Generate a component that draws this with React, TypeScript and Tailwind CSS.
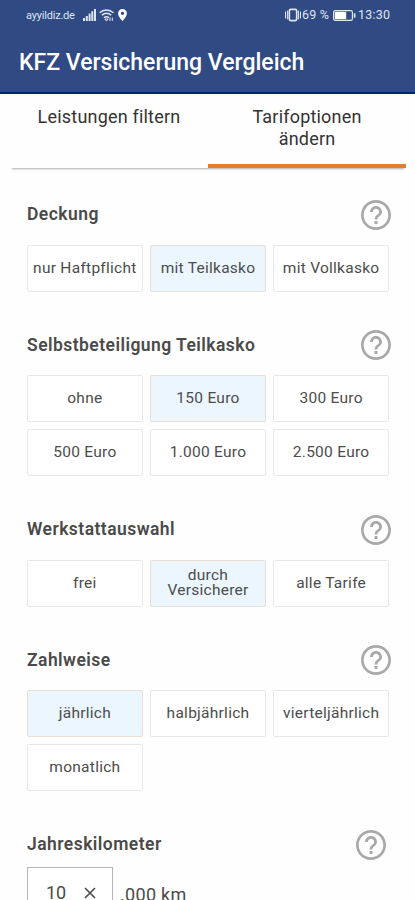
import { useState } from "react";

type OptionGroup = {
  title: string;
  options: string[];
  initial: string;
};

const groups: OptionGroup[] = [
  {
    title: "Deckung",
    options: ["nur Haftpflicht", "mit Teilkasko", "mit Vollkasko"],
    initial: "mit Teilkasko",
  },
  {
    title: "Selbstbeteiligung Teilkasko",
    options: ["ohne", "150 Euro", "300 Euro", "500 Euro", "1.000 Euro", "2.500 Euro"],
    initial: "150 Euro",
  },
  {
    title: "Werkstattauswahl",
    options: ["frei", "durch Versicherer", "alle Tarife"],
    initial: "durch Versicherer",
  },
  {
    title: "Zahlweise",
    options: ["jährlich", "halbjährlich", "vierteljährlich", "monatlich"],
    initial: "jährlich",
  },
];

function HelpIcon() {
  return (
    <svg viewBox="2 2 20 20" className="h-[30px] w-[30px] shrink-0" fill="#a9a9a9">
      <path d="M11 18h2v-2h-2v2zm1-16C6.48 2 2 6.48 2 12s4.48 10 10 10 10-4.48 10-10S17.52 2 12 2zm0 18.2c-4.53 0-8.2-3.67-8.2-8.2s3.67-8.2 8.2-8.2 8.2 3.67 8.2 8.2-3.67 8.2-8.2 8.2zm0-14.2c-2.21 0-4 1.79-4 4h1.9c0-1.16.94-2.1 2.1-2.1s2.1.94 2.1 2.1c0 2-3 1.75-3 5h1.8c0-2.25 3.1-2.5 3.1-5 0-2.21-1.79-4-4-4z" />
    </svg>
  );
}

function StatusBar() {
  return (
    <div className="flex h-[30px] items-center pr-6 pl-[26px] text-[#dfe5f2]">
      <span className="w-[57px] text-[11px] leading-none tracking-[-0.2px] whitespace-nowrap">
        ayyildiz.de
      </span>
      {/* Signal */}
      <svg viewBox="0 0 13 12" className="h-3 w-[13px]" fill="currentColor">
        <rect x="0" y="9" width="2" height="3" />
        <rect x="2.8" y="7" width="2" height="5" />
        <rect x="5.6" y="4.6" width="2" height="7.4" />
        <rect x="8.3" y="2.3" width="2" height="9.7" />
        <rect x="11" y="0" width="2" height="12" />
      </svg>
      {/* Wifi */}
      <svg
        viewBox="0 0 15 13"
        className="ml-[3px] h-[13px] w-[15px]"
        fill="none"
        stroke="currentColor"
        strokeWidth="1.5"
      >
        <path d="M.6 3.8c4-3.7 9.8-3.7 13.8 0M2.8 6.3c2.8-2.6 6.6-2.6 9.4 0M5 8.8c1.6-1.4 3.4-1.4 5 0" />
        <path d="M7.5 12 5.8 10h3.4zM11 8.5v3.4M13.3 8.5v3.4" strokeWidth="1" />
      </svg>
      {/* Location */}
      <svg viewBox="0 0 9 12" className="ml-[4px] h-3 w-[9px]" fill="#fff">
        <path
          fillRule="evenodd"
          d="M4.5 0A4.4 4.4 0 0 0 .1 4.4C.1 7.6 4.5 12 4.5 12s4.4-4.4 4.4-7.6A4.4 4.4 0 0 0 4.5 0Zm0 2.7a1.6 1.6 0 1 1 0 3.3 1.6 1.6 0 0 1 0-3.3Z"
        />
      </svg>
      {/* Vibration */}
      <svg
        viewBox="0 0 17 14"
        className="ml-auto h-[14px] w-[17px]"
        fill="none"
        stroke="currentColor"
      >
        <rect x="4.3" y="1.4" width="7.4" height="11.2" rx="1.5" strokeWidth="1.7" />
        <path d="M.5 3.6v6.8M2.4 2.6v8.8M13.6 2.6v8.8M15.5 3.6v6.8" strokeWidth="1" />
      </svg>
      <span className="w-[31px] text-[12.5px] leading-none tracking-[0.2px] whitespace-nowrap">
        69 %
      </span>
      {/* Battery */}
      <svg viewBox="0 0 23 11" className="h-[11px] w-[23px]" fill="none" stroke="currentColor">
        <rect x=".6" y=".6" width="18.8" height="9.8" rx="1.6" strokeWidth="1.2" />
        <rect x="1.8" y="1.8" width="11.4" height="7.4" fill="#fff" stroke="none" />
        <path d="M21.6 3.3v4.4" strokeWidth="1.7" />
      </svg>
      <span className="ml-[2px] w-[33px] text-[12.5px] leading-none tracking-[0.2px] whitespace-nowrap">
        13:30
      </span>
    </div>
  );
}

function OptionSection({ group }: { group: OptionGroup }) {
  const [selected, setSelected] = useState(group.initial);

  return (
    <section className="mb-[38.7px]">
      <div className="-mr-[2px] mb-[15px] flex h-[30px] items-center justify-between">
        <h2 className="-mt-px text-[17.5px] leading-5 font-semibold tracking-[0.45px] text-[#4a4a4a]">
          {group.title}
        </h2>
        <HelpIcon />
      </div>
      <div className="grid grid-cols-3 gap-x-[7.4px] gap-y-[6.6px]">
        {group.options.map((option) => (
          <button
            key={option}
            onClick={() => setSelected(option)}
            className={`flex h-[47px] items-center justify-center rounded-[2px] border text-center text-[15.5px] leading-[15px] tracking-[0.27px] text-[#4c4c4c] ${
              selected === option
                ? "border-[#eadfd5] bg-[#ebf6fe]"
                : "border-[#e8e8e8] bg-white"
            }`}
          >
            {option}
          </button>
        ))}
      </div>
    </section>
  );
}

export default function App() {
  const [tab, setTab] = useState(1);

  return (
    <div className="h-[900px] w-full overflow-hidden bg-[#fefefe] font-['Roboto',sans-serif]">
      <header className="h-[94px] border-b-2 border-[#0a2468] bg-[#304a84]">
        <StatusBar />
        <h1 className="mt-[19px] ml-[19px] text-[23px] leading-7 font-medium whitespace-nowrap text-white">
          KFZ Versicherung Vergleich
        </h1>
      </header>

      <nav className="mr-[9px] ml-[10px] flex h-[74px] shadow-[0_3px_2px_-2px_#aaa]">
        {["Leistungen filtern", "Tarifoptionen ändern"].map((label, i) => (
          <button
            key={label}
            onClick={() => setTab(i)}
            className={`flex flex-1 items-start justify-center border-b-4 px-6 pt-[12px] text-center text-[18px] leading-[22px] tracking-[0.2px] text-[#333] ${
              tab === i ? "border-[#e37e2c]" : "border-transparent"
            }`}
          >
            {label}
          </button>
        ))}
      </nav>

      <main className="pt-[31.8px] pr-[26px] pl-[27px]">
        {groups.map((group) => (
          <OptionSection key={group.title} group={group} />
        ))}

        {/* Mileage */}
        <section>
          <div className="mb-[7px] flex h-[30px] items-center justify-between pr-[3px]">
            <h2 className="-mt-px text-[17.5px] leading-5 font-semibold tracking-[0.45px] text-[#4a4a4a]">
              Jahreskilometer
            </h2>
            <HelpIcon />
          </div>
          <div className="flex text-[18px] text-[#4a4a4a]">
            <div className="flex h-[52px] w-[86px] items-center border border-[#b5b5b5] bg-white pl-[18px]">
              <span className="w-[38px] leading-none">10</span>
              <svg viewBox="0 0 12 12" className="h-3 w-3" stroke="#4a4a4a" strokeWidth="1.6">
                <path d="M1 1l10 10M11 1 1 11" />
              </svg>
            </div>
            <span className="ml-[7px] pt-[18px] leading-5 tracking-[0.3px]">.000 km</span>
          </div>
        </section>
      </main>
    </div>
  );
}
